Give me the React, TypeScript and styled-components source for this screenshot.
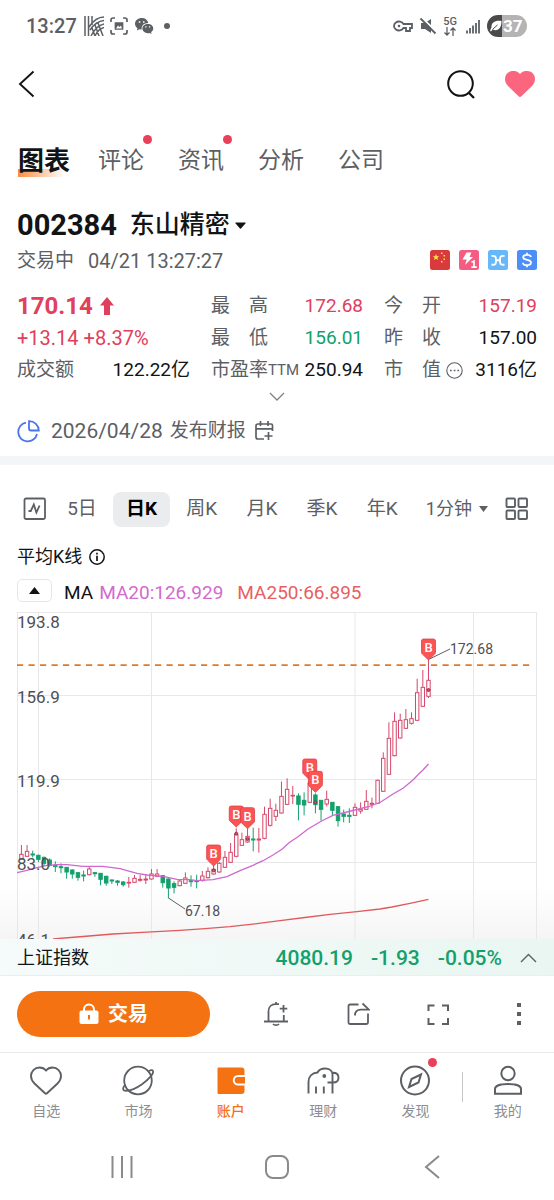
import React from "react";
import styled, { createGlobalStyle, css } from "styled-components";

const ink = "#111315";
const grey = "#5c6064";
const red = "#e0405c";
const green = "#12a06c";
const orange = "#f57212";

const GlobalStyle = createGlobalStyle`
  * { box-sizing: border-box; }
  body {
    margin: 0;
    background: #fff;
    color: ${ink};
    font-family: Roboto, "Noto Sans CJK SC", sans-serif;
    font-size: 19px;
    line-height: 24px;
  }
  svg { display: block; flex: none; }
  h1, dl, dd, dt, p { margin: 0; font-weight: inherit; font-size: inherit; }
`;

const Screen = styled.div`
  display: flex;
  flex-direction: column;
`;

const PlainButton = styled.button`
  display: flex;
  align-items: center;
  justify-content: center;
  padding: 0;
  border: 0;
  background: none;
  color: inherit;
  font: inherit;
  white-space: nowrap;
`;

const StatusBar = styled.div`
  display: flex;
  align-items: center;
  justify-content: space-between;
  height: 52px;
  padding: 0 27px 0 26px;
  color: ${grey};
`;

const StatusGroup = styled.div<{ $gap: number }>`
  display: flex;
  align-items: center;
  gap: ${(p) => p.$gap}px;
`;

const Clock = styled.span`
  font-size: 20px;
  font-weight: 500;
  margin-right: 2px;
`;

const Network = styled.span`
  display: flex;
  flex-direction: column;
  align-items: center;
  font-size: 11px;
  line-height: 10px;
  font-weight: 500;
`;

const Battery = styled.span`
  display: flex;
  align-items: center;
  gap: 1px;
  width: 40px;
  height: 22px;
  padding-left: 3px;
  border-radius: 11px;
  background: linear-gradient(90deg, #4a4a4a 37%, #b4b4b4 37%);
  color: #fff;
  font-size: 17px;
  font-weight: 700;
`;

const NavBar = styled.header`
  display: flex;
  align-items: center;
  justify-content: space-between;
  height: 64px;
  padding: 0 18px 0 17px;
`;

const NavActions = styled.div`
  display: flex;
  align-items: center;
  gap: 28px;
`;

const Tabs = styled.nav`
  display: flex;
  align-items: center;
  gap: 28px;
  height: 88px;
  padding: 2px 17px 0 18px;
`;

const Tab = styled.a<{ $active?: boolean }>`
  position: relative;
  color: ${grey};
  font-size: 23px;
  line-height: 32px;
  text-decoration: none;
  margin-right: 6px;
  ${(p) =>
    p.$active &&
    css`
      margin-right: 0;
      color: ${ink};
      font-size: 26px;
      font-weight: 700;
      background: linear-gradient(100deg, #fb8a3e, rgba(255, 190, 140, 0) 92%) 0 100% / 50px 8px no-repeat;
    `}
`;

const Dot = styled.span<{ $top: number; $right: number }>`
  position: absolute;
  top: ${(p) => p.$top}px;
  right: ${(p) => p.$right}px;
  width: 9px;
  height: 9px;
  border-radius: 50%;
  background: #ea3f58;
`;

const TitleRow = styled.div`
  display: flex;
  height: 40px;
  padding: 2px 17px 0;
`;

const StockName = styled.h1`
  display: flex;
  align-items: center;
`;

const StockButton = styled(PlainButton)`
  gap: 13px;
  font-size: 25px;
  font-weight: 700;
`;

const Code = styled.span`
  font-size: 29px;
`;

const NameWithCaret = styled.span`
  display: flex;
  align-items: center;
  gap: 5px;
  font-weight: 500;
`;

const MetaRow = styled.div`
  display: flex;
  align-items: center;
  justify-content: space-between;
  height: 32px;
  padding: 0 17px;
  color: ${grey};
`;

const MetaText = styled.div`
  display: flex;
  align-items: center;
  gap: 14px;
  padding-top: 2px;
`;

const Stamp = styled.time`
  font-size: 20px;
`;

const Badges = styled.div`
  display: flex;
  gap: 9px;
`;

const Quote = styled.section`
  display: grid;
  grid-template-columns: 173fr 152fr 153fr;
  column-gap: 21px;
  padding: 14px 17px 0;
`;

const QuoteColumn = styled.dl`
  display: grid;
  grid-auto-rows: 32px;
`;

const QuoteRow = styled.div`
  display: flex;
  align-items: center;
  justify-content: space-between;
  white-space: nowrap;
`;

const Label = styled.dt`
  display: flex;
  align-items: center;
  gap: 5px;
  color: ${grey};
  small { font-size: 15px; margin-left: -5px; }
`;

const Value = styled.dd<{ $color?: string }>`
  color: ${(p) => p.$color ?? ink};
`;

const Price = styled.dd`
  display: flex;
  align-items: center;
  gap: 7px;
  color: ${red};
  font-size: 24px;
  font-weight: 700;
`;

const Change = styled.dd`
  color: ${red};
  font-size: 20px;
`;

const ExpandButton = styled(PlainButton)`
  height: 20px;
`;

const Earnings = styled.div`
  display: flex;
  align-items: center;
  gap: 7px;
  height: 50px;
  padding: 0 17px;
  color: ${grey};
  time { font-size: 21px; margin-left: 4px; }
`;

const Band = styled.div`
  height: 9px;
  background: #f4f5f6;
`;

const Periods = styled.div`
  display: flex;
  align-items: center;
  justify-content: space-between;
  height: 88px;
  padding: 0 25px 0 23px;
  color: ${grey};
`;

const Period = styled(PlainButton)<{ $active?: boolean }>`
  height: 35px;
  padding: 0 13px;
  border-radius: 8px;
  ${(p) =>
    p.$active &&
    css`
      color: #000;
      font-weight: 700;
      background: #ebecee;
    `}
`;

const TimelineButton = styled(PlainButton)`
  margin-right: 4px;
`;

const MinuteField = styled.label`
  display: flex;
  align-items: center;
  gap: 6px;
  padding: 0 14px 0 12px;
`;

const MinuteSelect = styled.select`
  appearance: none;
  padding: 0;
  border: 0;
  background: none;
  color: inherit;
  font: inherit;
  font-size: 18px;
`;

const ChartTitle = styled.div`
  display: flex;
  align-items: center;
  gap: 7px;
  height: 24px;
  margin-top: -8px;
  padding: 0 17px;
  font-size: 18px;
`;

const Legend = styled.div`
  display: flex;
  align-items: center;
  height: 43px;
  padding: 4px 17px 0;
  white-space: nowrap;
`;

const Fold = styled(PlainButton)`
  width: 35px;
  height: 23px;
  margin: 0 12px 5px 0;
  border: 1px solid #e4e6e8;
  border-radius: 5px;
`;

const Series = styled.span<{ $color: string; $gap: number }>`
  margin-right: ${(p) => p.$gap}px;
  color: ${(p) => p.$color};
`;

const ChartPanel = styled.section`
  padding: 0 17px;
  background: linear-gradient(#fff 84%, #f5f5f5);
  svg { width: 100%; height: auto; }
`;

const IndexBar = styled.div`
  display: flex;
  align-items: center;
  gap: 18px;
  height: 37px;
  padding: 2px 17px 0;
  border-bottom: 1px solid #eceeef;
  background: linear-gradient(90deg, #f5fbfa, #e9f6f2);
  color: ${green};
  font-size: 21px;
  font-weight: 500;
`;

const IndexName = styled.span`
  flex: 1;
  color: ${ink};
  font-size: 18px;
  font-weight: 400;
`;

const ActionBar = styled.div`
  display: flex;
  align-items: center;
  height: 77px;
  padding: 0 23px 0 17px;
  border-bottom: 1px solid #e9eaeb;
  color: ${grey};
`;

const TradeButton = styled(PlainButton)`
  flex: 0 0 193px;
  gap: 9px;
  height: 46px;
  border-radius: 23px;
  background: ${orange};
  color: #fff;
  font-size: 20px;
  font-weight: 700;
`;

const Actions = styled.div`
  display: flex;
  flex: 1;
  justify-content: space-between;
  padding-left: 53px;
`;

const BottomNav = styled.nav`
  display: grid;
  grid-template-columns: repeat(6, 1fr);
  height: 80px;
  color: ${grey};
`;

const NavItem = styled.a<{ $active?: boolean; $split?: boolean }>`
  position: relative;
  display: flex;
  flex-direction: column;
  align-items: center;
  gap: 1px;
  padding-top: 11px;
  color: ${(p) => (p.$active ? orange : "#8b8e92")};
  font-size: 14px;
  font-weight: ${(p) => (p.$active ? 500 : 400)};
  text-decoration: none;
  svg { color: ${(p) => (p.$active ? orange : grey)}; }
  ${(p) =>
    p.$split &&
    css`
      background: linear-gradient(#c4c6c8, #c4c6c8) 0 19px / 1px 30px no-repeat;
    `}
`;

const SystemNav = styled.div`
  display: flex;
  align-items: center;
  justify-content: space-around;
  height: 68px;
  padding: 0 44px;
  color: #8a8a8a;
`;

const Icon = ({
  size = 24,
  width = 2,
  children,
}: {
  size?: number;
  width?: number;
  children: React.ReactNode;
}) => (
  <svg
    width={size}
    height={size}
    viewBox={`0 0 ${size} ${size}`}
    fill="none"
    stroke="currentColor"
    strokeWidth={width}
    aria-hidden="true"
  >
    {children}
  </svg>
);

const Caret = ({ up = false }: { up?: boolean }) => (
  <svg width="11" height="7" viewBox="0 0 11 7" fill="currentColor" aria-hidden="true">
    <path d={up ? "M0 7 5.5 0 11 7z" : "M.8.4h9.4a.5.5 0 0 1 .4.8L6 6.6a.7.7 0 0 1-1 0L.4 1.2a.5.5 0 0 1 .4-.8z"} />
  </svg>
);

/* Each candle: rising flag, body top, body bottom, high, low (thirds of a chart unit). */
const candles: [number, number, number, number, number][] = [
  [1, 343, 358, 315, 358], [1, 334, 349, 315, 349], [0, 342, 345, 332, 352], [0, 346, 358, 344, 366],
  [0, 352, 370, 350, 378], [0, 360, 376, 355, 380], [0, 376, 380, 364, 396], [0, 380, 383, 370, 400],
  [0, 382, 396, 381, 416], [0, 390, 402, 388, 416], [0, 398, 412, 396, 422], [0, 405, 408, 392, 424],
  [1, 387, 404, 378, 406], [0, 398, 401, 396, 410], [0, 400, 418, 399, 436], [0, 409, 429, 407, 437],
  [0, 420, 423, 418, 432], [0, 423, 427, 420, 437], [0, 426, 434, 423, 440], [1, 427, 429, 411, 443],
  [1, 415, 427, 405, 429], [1, 418, 421, 405, 425], [1, 417, 420, 402, 432], [1, 402, 417, 387, 419],
  [1, 402, 409, 387, 411], [0, 407, 428, 405, 443], [0, 417, 444, 415, 475], [0, 431, 442, 424, 460],
  [1, 423, 437, 418, 439], [1, 414, 430, 397, 432], [0, 422, 425, 406, 440], [0, 422, 425, 404, 445],
  [1, 408, 421, 393, 425], [1, 394, 413, 382, 416], [1, 388, 402, 375, 404], [1, 370, 396, 366, 398],
  [1, 352, 382, 333, 384], [1, 337, 367, 309, 369], [1, 283, 349, 265, 352], [1, 299, 316, 278, 318],
  [1, 289, 306, 265, 308], [0, 297, 300, 263, 334], [1, 297, 300, 264, 338], [1, 223, 295, 200, 298],
  [1, 205, 256, 176, 260], [1, 211, 229, 191, 243], [1, 169, 219, 125, 221], [1, 148, 193, 115, 195],
  [1, 166, 168, 138, 192], [0, 168, 193, 160, 241], [0, 181, 195, 157, 226], [1, 130, 187, 110, 189],
  [0, 165, 194, 160, 220], [0, 181, 208, 180, 242], [1, 178, 192, 152, 199], [0, 187, 211, 186, 226],
  [0, 200, 242, 198, 260], [0, 222, 229, 209, 247], [0, 226, 229, 205, 249], [1, 202, 226, 190, 228],
  [1, 208, 213, 187, 221], [1, 184, 208, 150, 210], [1, 190, 193, 173, 205], [1, 121, 190, 119, 192],
  [1, 55, 154, 37, 156], [1, -5, 103, -53, 105], [1, -56, 47, -83, 49], [1, -59, -6, -79, -4],
  [1, -61, -35, -93, -33], [1, -64, -50, -83, -46], [1, -142, -59, -184, -57], [1, -158, -101, -210, -99],
  [1, -179, -131, -242, -126],
];

/* Buy marks: candle index, top of the flag, height of the trade point. */
const buys: [number, number, number][] = [
  [34, 315, 391], [38, 198, 281], [40, 203, 297], [51, 57, 129], [52, 94, 187], [72, -303, -150],
];

const cx = (i: number) => 4.4 + i * 5.654;
const cy = (v: number) => 128 + v / 3;

const ma20Points =
  "0,260.7 10,258.3 20,255.7 30,253.3 40,252.7 50,252.7 66,254.3 86,254.3 103,256.7 120,261.3 130,263 146,264.3 160,267.3 173,267.7 180,268.7 196,267.7 210,264.7 223,258.7 236,253.3 246,248.7 256,243 265,237.3 272,230.7 281,224.7 291,217 305,208.7 316,203.3 336,198.5 352,194.5 363,190.5 376,182 386,176.3 396,168 401,162.7 406,158 411.5,152";
const ma250Points =
  "36,327 66,324.5 96,322 130,320.2 163,318.3 188,316.7 213,314.7 238,311.9 263,308.7 288,305.5 313,302.3 340,299.6 363,297 375,295 393,291.3 411.5,287.3";

function KLineChart() {
  return (
    <svg viewBox="0 0 520 327" fontFamily="Roboto, sans-serif" role="img" aria-label="日K">
      <g stroke="#e8e8ea" fill="none">
        {[0.5, 21.5, 134.5, 338, 456.5, 519.5].map((x) => (
          <path key={x} d={`M${x} 0V327`} />
        ))}
        {[0.5, 83.5, 167.5, 250.5].map((y) => (
          <path key={y} d={`M0 ${y}H520`} />
        ))}
      </g>
      <path d="M0 53.2H515" stroke="#e07a28" strokeWidth="1.8" strokeDasharray="6.2 5.3" />
      {candles.map(([up, top, bottom, high, low], i) => {
        const color = up ? "#d6476a" : green;
        return (
          <g key={i} stroke={color}>
            <path d={`M${cx(i)} ${cy(high)}V${cy(top)}M${cx(i)} ${cy(bottom)}V${cy(low)}`} />
            <rect
              x={cx(i) - 1.7}
              y={cy(top)}
              width="3.4"
              height={(bottom - top) / 3}
              fill={up ? "#fff" : color}
            />
          </g>
        );
      })}
      <polyline points={ma20Points} fill="none" stroke="#cf68cf" strokeWidth="1.3" />
      <polyline points={ma250Points} fill="none" stroke="#df5a5c" strokeWidth="1.3" />
      {buys.map(([i, top, point]) => (
        <g key={i}>
          <circle cx={cx(i)} cy={cy(point)} r="1.5" fill="#c7556c" stroke="#8c2740" strokeWidth=".9" />
          <g transform={`translate(${cx(i) - 7} ${cy(top)})`}>
            <path
              d="M2 0h10a2 2 0 0 1 2 2v11.5a2 2 0 0 1-.8 1.5L8.5 19.6 7 21l-1.5-1.4L.8 15A2 2 0 0 1 0 13.5V2a2 2 0 0 1 2-2z"
              fill="#fb5453"
              stroke="#e23f45"
              strokeWidth=".8"
            />
            <text x="7" y="13" textAnchor="middle" fontSize="13" fontWeight="500" fill="#fff">
              B
            </text>
          </g>
        </g>
      ))}
      <g stroke={grey}>
        <path d="M151.5 286 168 297" />
        <path d="M412.5 47 433 37" />
      </g>
      <g fill="#4d5054">
        <g fontSize="17">
          <text x="0" y="16">193.8</text>
          <text x="0" y="91">156.9</text>
          <text x="0" y="175">119.9</text>
          <text x="0" y="258">83.0</text>
          <text x="0" y="334">46.1</text>
        </g>
        <g fontSize="14">
          <text x="168" y="304">67.18</text>
          <text x="433" y="42">172.68</text>
        </g>
      </g>
    </svg>
  );
}

const Badge = ({ color, children }: { color: string; children: React.ReactNode }) => (
  <svg width="20" height="20" viewBox="0 0 20 20" fill="none" aria-hidden="true">
    <rect width="20" height="20" rx="2.5" fill={color} />
    {children}
  </svg>
);

export default function App() {
  return (
    <Screen>
      <GlobalStyle />
      <StatusBar>
        <StatusGroup $gap={5}>
          <Clock>13:27</Clock>
          <Icon size={20} width={1.7}>
            <path d="M1 0v20M4.5 0v20M8 0v9M20 1C14 1 9 5 5 11M20 4.500C14 5 10 8 6 14M20 8C15 9 11 12 7 20M20 11.500c-4 1-7 4-9 8.500M8 12l3 8M11 9l4 11M14 7l5 13" strokeWidth="1.5" />
          </Icon>
          <Icon size={20} width={1.7}>
            <path d="M2 6V4a2 2 0 0 1 2-2h2M14 2h2a2 2 0 0 1 2 2v2M18 14v2a2 2 0 0 1-2 2h-2M6 18H4a2 2 0 0 1-2-2v-2" />
            <path d="M6.500 7h7v6h-7z" fill="currentColor" />
            <path d="m7 12.500 2-3 1.500 1.500L12 9.500l1 3z" fill="#fff" stroke="none" />
          </Icon>
          <Icon size={20} width={0}>
            <path fill="currentColor" d="M8 2C3.800 2 1 4.600 1 7.800c0 1.900 1 3.400 2.400 4.400L3 14.400l2.400-1.200c.8.200 1.500.3 2.300.3-.6-3.600 2.400-6.400 6.600-6.400C13.700 4 11.300 2 8 2z" />
            <path fill="currentColor" d="M14 8c-3.300 0-5.600 2.100-5.600 4.600 0 2.600 2.400 4.600 5.500 4.600.6 0 1.200-.1 1.800-.3l1.900 1-.5-1.700c1.300-.9 2.200-2.100 2.200-3.600C19.300 10.100 17 8 14 8z" />
            <path fill="#fff" d="M4.800 5.200h1.500v1.500H4.800zM9 5.200h1.500v1.500H9zM11.300 10.300h1.200v1.200h-1.200zM15 10.300h1.200v1.200H15z" />
          </Icon>
          <Icon size={12} width={0}>
            <circle cx="8" cy="6" r="3" fill="currentColor" />
          </Icon>
        </StatusGroup>
        <StatusGroup $gap={6}>
          <Icon size={20} width={1.8}>
            <path d="M10.500 8h8.500v4h-2v3h-4v-3h-2.500a5 4.500 0 1 1 0-4z" />
            <circle cx="6" cy="10" r="1.300" fill="currentColor" stroke="none" />
          </Icon>
          <Icon size={18} width={1.8}>
            <path d="M2 6h4l6-4v14l-6-4H2z" fill="currentColor" stroke="none" />
            <path d="M3 1 18.500 15.500" stroke="#fff" strokeWidth="2" />
            <path d="M1.500 1.500l15 15" />
          </Icon>
          <Network>
            5G
            <svg width="12" height="9" viewBox="0 0 12 9" fill="none" stroke="currentColor" strokeWidth="1.300" aria-hidden="true">
              <path d="M3 0v8M.5 5.500 3 8l2.500-2.500M9 9V1M6.500 3.500 9 1l2.500 2.500" />
            </svg>
          </Network>
          <Icon size={18} width={1.8}>
            <path d="M4 16.500v-3M7 16.500v-5.500M10 16.500V8.500M13 16.500V6M16 16.500V3" />
          </Icon>
          <Battery>
            <Icon size={12} width={0}>
              <path fill="#fff" d="M11.500 1C6 0 1 2 1.500 7.500L0 10.500l1 1 1.500-2C8 12 11.500 8 11.500 1z" />
              <path stroke="#4a4a4a" strokeWidth="1" d="M2.500 9.500 7.500 5" />
            </Icon>
            37
          </Battery>
        </StatusGroup>
      </StatusBar>

      <NavBar>
        <PlainButton aria-label="返回">
          <Icon size={28} width={1.9}>
            <path d="M16.500 1.500 3 14 16.500 26.500" />
          </Icon>
        </PlainButton>
        <NavActions>
          <PlainButton aria-label="搜索">
            <Icon size={30} width={2}>
              <circle cx="14.500" cy="14.500" r="12.300" />
              <path d="m22.500 23.500 5.500 5.500" strokeWidth="2.300" />
            </Icon>
          </PlainButton>
          <PlainButton aria-label="已自选">
            <svg width="32" height="28" viewBox="0 0 32 28" fill="#fb657e" aria-hidden="true">
              <path d="M16 4C18 1.500 20.500 1 23 1c4.500 0 8 3.400 8 8 0 3-1.300 5.300-3.500 7.600L17.700 26a2.300 2.300 0 0 1-3.400 0l-9.800-9.400C2.300 14.300 1 12 1 9c0-4.600 3.500-8 8-8 2.500 0 5 .5 7 3z" />
            </svg>
          </PlainButton>
        </NavActions>
      </NavBar>

      <Tabs>
        <Tab href="#chart" $active>图表</Tab>
        <Tab href="#comments">评论<Dot $top={-10} $right={-8} /></Tab>
        <Tab href="#news">资讯<Dot $top={-10} $right={-8} /></Tab>
        <Tab href="#analysis">分析</Tab>
        <Tab href="#company">公司</Tab>
      </Tabs>

      <TitleRow>
        <StockName>
          <StockButton aria-haspopup="listbox">
            <Code>002384</Code>
            <NameWithCaret>东山精密 <Caret /></NameWithCaret>
          </StockButton>
        </StockName>
      </TitleRow>
      <MetaRow>
        <MetaText>
          <span>交易中</span>
          <Stamp>04/21 13:27:27</Stamp>
        </MetaText>
        <Badges>
          <Badge color="#d93a3c">
            <path fill="#fbe04a" d="m6 4 .9 2.200 2.300.1-1.800 1.500.6 2.300-2-1.300-2 1.300.6-2.300L2.800 6.300l2.300-.1zM11 2.500h1.500V4H11zM13.500 5H15v1.500h-1.500zM13.500 8.500H15V10h-1.500zM11 11h1.500v1.500H11z" />
          </Badge>
          <Badge color="#f45c82">
            <path fill="#fff" d="M7.500 2.500h5L10.500 7h3.500l-8 8 1.800-5.500H3.500z" />
            <path stroke="#fff" strokeWidth="1.700" d="M12.500 12.200 15 11v6.200M12.300 17.200h5.500" />
          </Badge>
          <Badge color="#66b8fa">
            <path stroke="#fff" strokeWidth="1.900" d="M3.500 6C8 5.500 8 7 8 10.300S8 15 3.500 14.700M16.500 6C12 5.500 12 7 12 10.300s0 4.700 4.500 4.400M8 10.300h4" />
          </Badge>
          <Badge color="#4d8ff8">
            <path stroke="#fff" strokeWidth="1.800" d="M14 7c-.3-1.500-1.800-2.200-4-2.200S6.200 5.700 6.200 7.300C6.200 11 14 8.500 14 12.500c0 1.700-1.700 2.700-4 2.700S6 14.300 6 12.700M10 2.800v2M10 15v2.200" />
          </Badge>
        </Badges>
      </MetaRow>

      <Quote>
        <QuoteColumn>
          <QuoteRow>
            <Price>
              170.14
              <svg width="14" height="18" viewBox="0 0 14 18" fill="currentColor" aria-hidden="true">
                <path d="M7 0 14 8.500h-4V18H4V8.500H0z" />
              </svg>
            </Price>
          </QuoteRow>
          <QuoteRow>
            <Change>+13.14 +8.37%</Change>
          </QuoteRow>
          <QuoteRow>
            <Label>成交额</Label>
            <Value>122.22亿</Value>
          </QuoteRow>
        </QuoteColumn>
        <QuoteColumn>
          <QuoteRow>
            <Label>最　高</Label>
            <Value $color={red}>172.68</Value>
          </QuoteRow>
          <QuoteRow>
            <Label>最　低</Label>
            <Value $color={green}>156.01</Value>
          </QuoteRow>
          <QuoteRow>
            <Label>市盈率<small>TTM</small></Label>
            <Value>250.94</Value>
          </QuoteRow>
        </QuoteColumn>
        <QuoteColumn>
          <QuoteRow>
            <Label>今　开</Label>
            <Value $color={red}>157.19</Value>
          </QuoteRow>
          <QuoteRow>
            <Label>昨　收</Label>
            <Value>157.00</Value>
          </QuoteRow>
          <QuoteRow>
            <Label>
              市　值
              <Icon size={17} width={1.1}>
                <circle cx="8.500" cy="8.500" r="7.700" />
                <path strokeWidth="1.700" d="M4 8.500h1.700M7.700 8.500h1.700M11.400 8.500h1.700" />
              </Icon>
            </Label>
            <Value>3116亿</Value>
          </QuoteRow>
        </QuoteColumn>
      </Quote>
      <ExpandButton aria-label="展开">
        <svg width="16" height="9" viewBox="0 0 16 9" fill="none" stroke="#7d8084" strokeWidth="1.300" aria-hidden="true">
          <path d="m1 1 7 7 7-7" />
        </svg>
      </ExpandButton>
      <Earnings>
        <svg width="23" height="23" viewBox="0 0 23 23" fill="none" stroke="#4a74e8" strokeWidth="1.800" aria-hidden="true">
          <path d="M9 2.600A9.500 9.500 0 1 0 20 14" />
          <path d="M12 1.200v7.300a2 2 0 0 0 2 2h7.800C21.600 5 17.500 1.200 12 1.200z" />
        </svg>
        <time>2026/04/28</time>
        <span>发布财报</span>
        <PlainButton aria-label="加入日历">
          <Icon size={22} width={1.7}>
            <path d="M11 19H5a2 2 0 0 1-2-2V6a2 2 0 0 1 2-2h13a1.500 1.500 0 0 1 1.500 1.500V11M3 8.800h16.500M7.500 1v5M15 1v5M15.500 12v8M11.500 16h8" />
          </Icon>
        </PlainButton>
      </Earnings>

      <Band />

      <Periods>
        <TimelineButton aria-label="分时">
          <Icon size={24} width={1.8}>
            <rect x="1.500" y="1.500" width="20.500" height="20.500" rx="1.500" />
            <path d="M5.500 14h2.300l3-6.500 2.600 8 3.200-7" />
          </Icon>
        </TimelineButton>
        <Period>5日</Period>
        <Period $active>日K</Period>
        <Period>周K</Period>
        <Period>月K</Period>
        <Period>季K</Period>
        <Period>年K</Period>
        <MinuteField>
          <MinuteSelect aria-label="分钟周期" defaultValue="1">
            <option value="1">1分钟</option>
            <option value="5">5分钟</option>
          </MinuteSelect>
          <svg width="9" height="6" viewBox="0 0 9 6" fill="currentColor" aria-hidden="true">
            <path d="M0 0h9L4.500 6z" />
          </svg>
        </MinuteField>
        <PlainButton aria-label="更多图表">
          <Icon size={24} width={1.9}>
            <rect x="1.500" y="1.500" width="8.500" height="8.500" rx="1" />
            <rect x="13.500" y="1.500" width="8.500" height="8.500" rx="1" />
            <rect x="1.500" y="13.500" width="8.500" height="8.500" rx="1" />
            <rect x="13.500" y="13.500" width="8.500" height="8.500" rx="1" />
          </Icon>
        </PlainButton>
      </Periods>

      <ChartTitle>
        平均K线
        <Icon size={16} width={1.5}>
          <circle cx="8" cy="8" r="7.200" />
          <path d="M8 6.800V12M8 3.800v1.700" strokeWidth="1.700" />
        </Icon>
      </ChartTitle>
      <Legend>
        <Fold aria-label="收起指标"><Caret up /></Fold>
        <Series $color={ink} $gap={6}>MA</Series>
        <Series $color="#d26ad0" $gap={14}>MA20:126.929</Series>
        <Series $color="#e85f62" $gap={0}>MA250:66.895</Series>
      </Legend>
      <ChartPanel>
        <KLineChart />
      </ChartPanel>

      <IndexBar>
        <IndexName>上证指数</IndexName>
        <span>4080.19</span>
        <span>-1.93</span>
        <span>-0.05%</span>
        <PlainButton aria-label="展开指数">
          <svg width="17" height="10" viewBox="0 0 17 10" fill="none" stroke={grey} strokeWidth="1.400" aria-hidden="true">
            <path d="m1 9 7.500-7.500L16 9" />
          </svg>
        </PlainButton>
      </IndexBar>

      <ActionBar>
        <TradeButton>
          <svg width="20" height="22" viewBox="0 0 20 22" fill="none" aria-hidden="true">
            <path d="M5 9V6.500a5 5 0 0 1 10 0V9" stroke="#fff" strokeWidth="2" />
            <rect x=".5" y="7.500" width="19" height="13.500" rx="2" fill="#fff" />
            <path d="M10 12v4.500" stroke={orange} strokeWidth="2" />
          </svg>
          交易
        </TradeButton>
        <Actions>
          <PlainButton aria-label="提醒">
            <Icon size={26} width={1.8}>
              <path d="M1 20.500h24M5.500 20.500V10.500C5.500 6 8.500 3.200 12.500 3.200H16M13 1v2.500M20.800 14v6.500M20.500 4v7.500M16.700 7.700h7.600" />
              <path d="M10 23c1.500 1.600 4.500 1.600 6 0" />
            </Icon>
          </PlainButton>
          <PlainButton aria-label="分享">
            <Icon size={24} width={1.8}>
              <path d="M12.500 2.500H4a1.500 1.500 0 0 0-1.500 1.500v16.500A1.500 1.500 0 0 0 4 22h16.500a1.500 1.500 0 0 0 1.500-1.500V11.500M9 13.500c0-4 2.500-5.800 6-5.800h8L16.500 1.500" />
            </Icon>
          </PlainButton>
          <PlainButton aria-label="全屏">
            <Icon size={24} width={2}>
              <path d="M2.500 9V3.500h6M16 3.500h6V9M22 16v6h-6M8.500 22h-6v-6" />
            </Icon>
          </PlainButton>
          <PlainButton aria-label="更多">
            <Icon size={24} width={0}>
              <path fill="currentColor" d="M10 1h4v4h-4zM10 10h4v4h-4zM10 19h4v4h-4z" />
            </Icon>
          </PlainButton>
        </Actions>
      </ActionBar>

      <BottomNav>
        <NavItem href="#watch">
          <Icon size={34} width={1.9}>
            <path d="M17 6.500C19 4 21.500 3.500 23.500 3.500c5 0 8.500 4 8.500 8.500 0 3-1.500 5.500-3.500 7.500L18 29.300a1.500 1.500 0 0 1-2 0L5.500 19.500C3.500 17.500 2 15 2 12c0-4.500 3.500-8.500 8.500-8.500 2 0 4.500.5 6.500 3z" />
          </Icon>
          自选
        </NavItem>
        <NavItem href="#market">
          <Icon size={34} width={1.8}>
            <circle cx="17" cy="16.500" r="13.800" />
            <path d="M4.500 21c-2.500 1-3.500 5.500-.5 5.700 4 .3 11-2.200 17-6.500 6.500-4.500 12-10.500 11-13.200-.6-1.500-3.500-1-4 .5" />
          </Icon>
          市场
        </NavItem>
        <NavItem href="#account" $active>
          <Icon size={34} width={0}>
            <path fill="currentColor" d="M4.500 3.500h23a3 3 0 0 1 3 3V11H24a5 5 0 0 0 0 10.500h6.500V27a3 3 0 0 1-3 3h-23a1 1 0 0 1-1-1V4.500a1 1 0 0 1 1-1z" />
            <path fill="currentColor" d="M31 13v6.500h-7a3.200 3.200 0 0 1 0-6.500z" />
          </Icon>
          账户
        </NavItem>
        <NavItem href="#wealth">
          <Icon size={34} width={1.9}>
            <path d="M2.500 29.500V18c0-5 3-9 9-9.500C13 5.500 15.500 4.500 19 4.500c4.500 0 7.500 2.500 7.500 6v19M10 22.500v7M17.800 22.500v7M21.500 18.500h5.500c3.500 0 5.500-2 5.500-4.800S30.500 8.800 27 8.800" />
            <circle cx="18.300" cy="12" r="1.900" fill="currentColor" stroke="none" />
          </Icon>
          理财
        </NavItem>
        <NavItem href="#discover">
          <Icon size={34} width={2}>
            <circle cx="17" cy="16.500" r="14" />
            <path d="m23 10.500-2.500 8-9.500 4.500 2.500-8z" />
          </Icon>
          发现
          <Dot $top={5} $right={25} />
        </NavItem>
        <NavItem href="#me" $split>
          <Icon size={34} width={2}>
            <circle cx="17" cy="9.500" r="6.700" />
            <path d="M4 29.800V25c0-3 5-5 13-5s13 2 13 5v4.800z" />
          </Icon>
          我的
        </NavItem>
      </BottomNav>

      <SystemNav>
        <PlainButton aria-label="最近任务">
          <Icon size={26} width={2}>
            <path d="M3.500 2v22M13 2v22M22.500 2v22" />
          </Icon>
        </PlainButton>
        <PlainButton aria-label="主页">
          <Icon size={26} width={2}>
            <rect x="2" y="2" width="22" height="22" rx="7" />
          </Icon>
        </PlainButton>
        <PlainButton aria-label="后退">
          <Icon size={26} width={2}>
            <path d="M20 2 7 13l13 11" />
          </Icon>
        </PlainButton>
      </SystemNav>
    </Screen>
  );
}
